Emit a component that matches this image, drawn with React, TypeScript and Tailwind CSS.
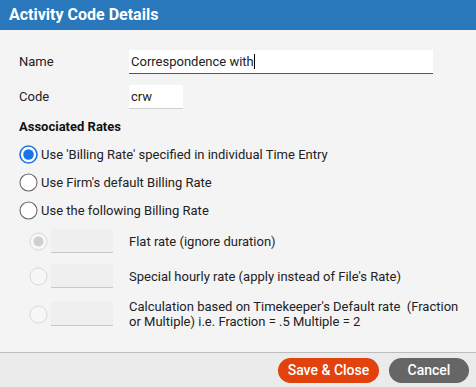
import React from "react";

function Radio({ checked = false, disabled = false }: { checked?: boolean; disabled?: boolean }) {
  if (disabled) {
    return (
      <svg width="19" height="19" viewBox="0 0 19 19" className="shrink-0">
        <circle cx="9.5" cy="9.5" r="8.5" fill="#f7f7f7" stroke="#d8d8d8" strokeWidth="1" />
        {checked && <circle cx="9.5" cy="9.5" r="5" fill="#cfcfcf" />}
      </svg>
    );
  }
  return (
    <svg width="19" height="19" viewBox="0 0 19 19" className="shrink-0">
      {checked ? (
        <>
          <circle cx="9.5" cy="9.5" r="8.5" fill="#fff" stroke="#1a73e8" strokeWidth="1.6" />
          <circle cx="9.5" cy="9.5" r="5.3" fill="#1a73e8" />
        </>
      ) : (
        <circle cx="9.5" cy="9.5" r="8.5" fill="#fff" stroke="#6b6b6b" strokeWidth="1.1" />
      )}
    </svg>
  );
}

function SubRow({ checked, children, top }: { checked?: boolean; children: React.ReactNode; top: string }) {
  return (
    <div className={`flex items-center ${top}`}>
      <div className="w-[110px] pl-[10px] flex items-center shrink-0">
        <Radio disabled checked={checked} />
        <div className="ml-[3px] w-[62px] h-[24px] bg-[#efefef] border-b border-[#c9c9c9]" />
      </div>
      <div className="text-[13px] leading-[15px] text-[#222]">{children}</div>
    </div>
  );
}

export default function App() {
  return (
    <div
      className="w-[476px] h-[387px] bg-[#f4f4f4] flex flex-col overflow-hidden"
      style={{ fontFamily: "Roboto, 'Liberation Sans', sans-serif" }}
    >
      <div className="h-[30px] bg-[#2a78bc] flex items-center px-[9px] shrink-0">
        <span className="text-white font-bold text-[16px] leading-none">Activity Code Details</span>
      </div>

      <div className="flex-1 pl-[19px] pt-[20px]">
        <div className="flex items-center h-[24px]">
          <div className="w-[110px] text-[13px] text-[#222]">Name</div>
          <div className="w-[304px] h-[24px] bg-white border-b border-[#555] flex items-center pl-[2px] text-[13px] text-[#222]">
            Correspondence with<span className="inline-block w-[1px] h-[15px] bg-black" />
          </div>
        </div>
        <div className="flex items-center h-[24px] mt-[11px]">
          <div className="w-[110px] text-[13px] text-[#222]">Code</div>
          <div className="w-[54px] h-[24px] bg-white border-b border-[#d0d0d0] flex items-center pl-[2px] text-[13px] text-[#222]">
            crw
          </div>
        </div>

        <div className="mt-[10px] text-[13px] font-bold text-[#111] leading-[16px]">Associated Rates</div>

        <div className="mt-[10px] flex flex-col gap-[9px]">
          <div className="flex items-center h-[19px] gap-[3px]">
            <Radio checked />
            <span className="text-[13px] text-[#222]">Use 'Billing Rate' specified in individual Time Entry</span>
          </div>
          <div className="flex items-center h-[19px] gap-[3px]">
            <Radio />
            <span className="text-[13px] text-[#222]">Use Firm's default Billing Rate</span>
          </div>
          <div className="flex items-center h-[19px] gap-[3px]">
            <Radio />
            <span className="text-[13px] text-[#222]">Use the following Billing Rate</span>
          </div>
        </div>

        <SubRow checked top="mt-[9px]">Flat rate (ignore duration)</SubRow>
        <SubRow top="mt-[11px]">Special hourly rate (apply instead of File's Rate)</SubRow>
        <SubRow top="mt-[11px]">
          Calculation based on Timekeeper's Default rate&nbsp; (Fraction
          <br />
          or Multiple) i.e. Fraction = .5 Multiple = 2
        </SubRow>
      </div>

      <div className="h-[35px] shrink-0 border-t border-[#bdbdbd] bg-[#ebebeb] flex items-center justify-end gap-[10px] pr-[7px]">
        <button className="h-[25px] w-[101px] rounded-full bg-[#e2420b] text-white text-[14px] font-medium">
          Save &amp; Close
        </button>
        <button className="h-[25px] w-[80px] rounded-full bg-[#666666] text-white text-[14px] font-medium">
          Cancel
        </button>
      </div>
    </div>
  );
}
